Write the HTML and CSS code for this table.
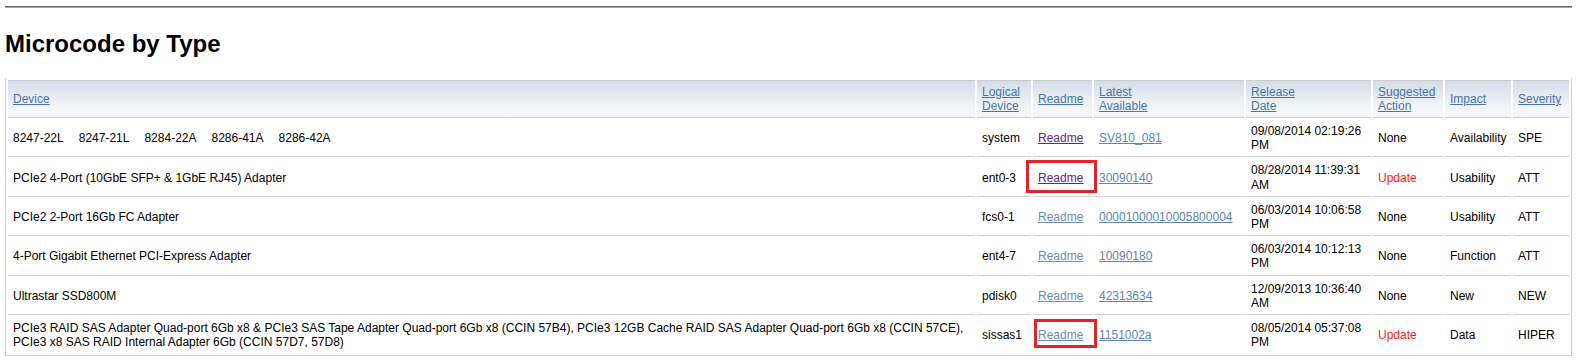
FILE: index.html
```html
<!DOCTYPE html>
<html>
<head>
<meta charset="utf-8">
<title>Microcode by Type</title>
<link rel="stylesheet" href="styles.css">
</head>
<body>
<div class="page">
  <hr class="rule">
  <h2 class="title">Microcode by Type</h2>
  <table class="mc">
    <thead>
      <tr>
        <th class="c-dev"><a href="#">Device</a></th>
        <th class="c-log"><a href="#">Logical Device</a></th>
        <th class="c-rd"><a href="#" class="plain">Readme</a></th>
        <th class="c-lat"><a href="#">Latest<br>Available</a></th>
        <th class="c-rel"><a href="#">Release<br>Date</a></th>
        <th class="c-sug"><a href="#">Suggested Action</a></th>
        <th class="c-imp"><a href="#">Impact</a></th>
        <th class="c-sev"><a href="#">Severity</a></th>
      </tr>
    </thead>
    <tbody>
      <tr>
        <td><span class="mt">8247-22L</span><span class="mt">8247-21L</span><span class="mt">8284-22A</span><span class="mt">8286-41A</span><span class="mt">8286-42A</span></td>
        <td>system</td>
        <td><a href="#" class="visited">Readme</a></td>
        <td><a href="#">SV810_081</a></td>
        <td>09/08/2014 02:19:26 PM</td>
        <td>None</td>
        <td>Availability</td>
        <td>SPE</td>
      </tr>
      <tr>
        <td>PCIe2 4-Port (10GbE SFP+ &amp; 1GbE RJ45) Adapter</td>
        <td>ent0-3</td>
        <td class="marked"><a href="#" class="visited">Readme</a><span class="callout callout-a"></span></td>
        <td><a href="#">30090140</a></td>
        <td>08/28/2014 11:39:31 AM</td>
        <td class="upd">Update</td>
        <td>Usability</td>
        <td>ATT</td>
      </tr>
      <tr>
        <td>PCIe2 2-Port 16Gb FC Adapter</td>
        <td>fcs0-1</td>
        <td><a href="#" class="dim">Readme</a></td>
        <td><a href="#">00001000010005800004</a></td>
        <td>06/03/2014 10:06:58 PM</td>
        <td>None</td>
        <td>Usability</td>
        <td>ATT</td>
      </tr>
      <tr>
        <td>4-Port Gigabit Ethernet PCI-Express Adapter</td>
        <td>ent4-7</td>
        <td><a href="#" class="dim">Readme</a></td>
        <td><a href="#">10090180</a></td>
        <td>06/03/2014 10:12:13 PM</td>
        <td>None</td>
        <td>Function</td>
        <td>ATT</td>
      </tr>
      <tr>
        <td>Ultrastar SSD800M</td>
        <td>pdisk0</td>
        <td><a href="#" class="dim">Readme</a></td>
        <td><a href="#">42313634</a></td>
        <td>12/09/2013 10:36:40 AM</td>
        <td>None</td>
        <td>New</td>
        <td>NEW</td>
      </tr>
      <tr class="last">
        <td>PCIe3 RAID SAS Adapter Quad-port 6Gb x8 &amp; PCIe3 SAS Tape Adapter Quad-port 6Gb x8 (CCIN 57B4), PCIe3 12GB Cache RAID SAS Adapter Quad-port 6Gb x8 (CCIN 57CE), PCIe3 x8 SAS RAID Internal Adapter 6Gb (CCIN 57D7, 57D8)</td>
        <td>sissas1</td>
        <td class="marked"><a href="#" class="dim">Readme</a><span class="callout callout-b"></span></td>
        <td><a href="#">1151002a</a></td>
        <td>08/05/2014 05:37:08 PM</td>
        <td class="upd">Update</td>
        <td>Data</td>
        <td>HIPER</td>
      </tr>
    </tbody>
  </table>
</div>
</body>
</html>
```

FILE: styles.css
```css
html, body {
  margin: 0;
  padding: 0;
  background: #fff;
}

body {
  font-family: "Liberation Sans", Arial, sans-serif;
  font-size: 12px;
  color: #000;
}

.page {
  margin: 0 7px 0 5px;
  padding-top: 6px;
}

.rule {
  margin: 0;
  height: 0;
  border: 0;
  border-top: 1px solid #646464;
  border-bottom: 1px solid #a8a8a8;
}

.title {
  margin: 22px 0 0 0;
  font-size: 24px;
  line-height: 28px;
  font-weight: bold;
  color: #000;
}

.mc {
  margin-top: 20px;
  width: 100%;
  table-layout: fixed;
  border-collapse: separate;
  border-spacing: 2px;
  border: 1px solid #cfcfcf;
  border-top: 0;
}

.mc th,
.mc td {
  box-sizing: border-box;
  padding: 4px 3px 4px 5px;
  line-height: 14px;
  text-align: left;
  vertical-align: middle;
  font-weight: normal;
}

.mc td {
  line-height: 14.2px;
  border-bottom: 1px solid #d0d0d0;
}

.mc th {
  border-top: 1px solid #cdcdcd;
  border-bottom: 1px solid #cdcdcd;
  background: linear-gradient(to bottom, #d3dde8 0%, #e6ecf3 45%, #f3f6f9 75%, #f6f8fb 100%);
}

.mc tr.last td {
  border-bottom: 0;
}

.c-log { width: 54px; }
.c-rd  { width: 59px; }
.c-lat { width: 150px; }
.c-rel { width: 125px; }
.c-sug { width: 70px; }
.c-imp { width: 66px; }
.c-sev { width: 56px; }

.mc th a {
  color: #4a74a6;
  text-decoration: underline;
}

.mc td a {
  color: #5d86b6;
  text-decoration: underline;
}

.mc td a.dim {
  color: #6b8db5;
}

.mc td a.visited {
  color: #5c2590;
}

.mt + .mt {
  margin-left: 15px;
}

.upd {
  color: #ff1a1a;
}

.marked {
  position: relative;
}

.callout {
  position: absolute;
  box-sizing: border-box;
  border: 3px solid #e3222a;
  pointer-events: none;
}

.callout-a {
  left: -7px;
  top: 1px;
  width: 71px;
  height: 33px;
}

.callout-b {
  left: 1px;
  top: 2px;
  width: 63px;
  height: 29px;
}
```
